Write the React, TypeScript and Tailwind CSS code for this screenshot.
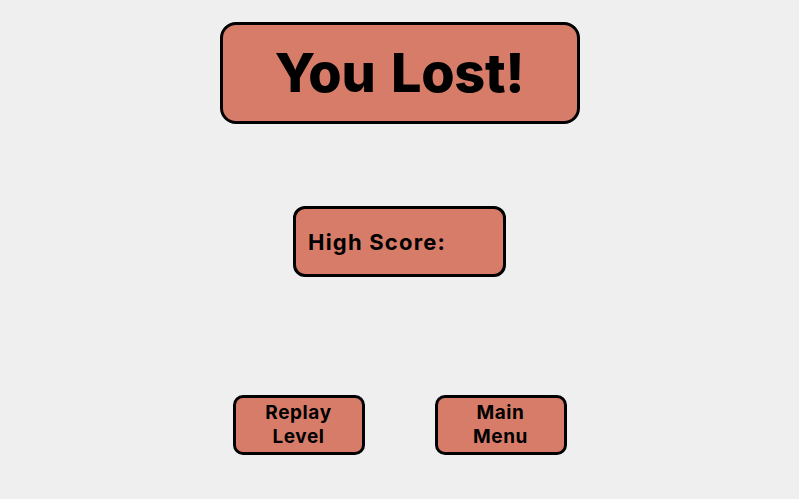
export default function App() {
  return (
    <div className="w-[799px] h-[499px] bg-[#efefef] flex flex-col items-center font-['Inter','Liberation_Sans',sans-serif] text-black">
      <div className="mt-[22px] w-[360px] h-[102px] bg-[#d87c6a] border-[3px] border-black rounded-[16px] flex items-center justify-center">
        <h1 className="text-[54px] font-extrabold leading-none tracking-[-0.3px] [word-spacing:4px]">You Lost!</h1>
      </div>

      <div className="mt-[82px] w-[213px] h-[71px] bg-[#d87c6a] border-[3px] border-black rounded-[12px] flex items-center px-[12px]">
        <span className="text-[22px] font-bold leading-none tracking-[1.2px]">High Score:</span>
      </div>

      <div className="mt-[118px] flex gap-[70px]">
        <button className="w-[132px] h-[60px] bg-[#d87c6a] border-[3px] border-black rounded-[10px] text-[19px] font-bold leading-[24px] tracking-[0.6px] text-center">
          Replay
          <br />
          Level
        </button>
        <button className="w-[132px] h-[60px] bg-[#d87c6a] border-[3px] border-black rounded-[10px] text-[19px] font-bold leading-[24px] tracking-[0.6px] text-center">
          Main
          <br />
          Menu
        </button>
      </div>
    </div>
  );
}
